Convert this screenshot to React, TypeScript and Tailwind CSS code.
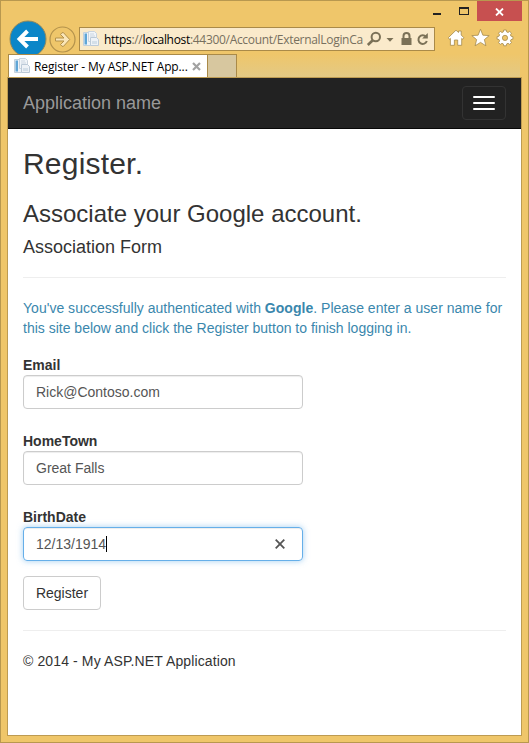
import React from "react";

function PageIcon() {
  return (
    <svg width="16" height="16" viewBox="0 0 16 16" className="shrink-0">
      <path d="M.5 1.500h7v13h-7z" fill="#eef3f8" stroke="#c3d0dc" />
      <path d="M1.500 2.500h2.500v11H1.500z" fill="#5fa5d6" />
      <path d="M5.500.5h6l2 2v8h-8z" fill="#f1f5f9" stroke="#c9d3de" />
      <path d="M7 3h4M7 5h5" stroke="#cbd5e1" />
      <path d="M7.500 6.500h6l2 2v6h-8z" fill="#eef2f7" stroke="#bccad8" />
      <path d="M9 10h5v3H9z" fill="#d4dfe9" />
    </svg>
  );
}

function TitleBar() {
  return (
    <div className="flex h-5 shrink-0 justify-end pr-[6px]">
      <svg width="44" height="20" viewBox="0 0 44 20" shapeRendering="crispEdges">
        <path d="M0 12h8v2H0z" fill="#222" />
        <path d="M26 6h10v8H26zM27 8v5h8V8z" fill="#222" fillRule="evenodd" />
      </svg>
      <div className="flex h-5 w-[45px] items-center justify-center bg-[#c75050]">
        <svg width="9" height="8" viewBox="0 0 9 8" className="mt-px">
          <path d="M1 .5l7 7M8 .5l-7 7" stroke="#fff" strokeWidth="1.8" />
        </svg>
      </div>
    </div>
  );
}

function AddressBar() {
  return (
    <div className="mt-[6px] flex h-6 w-[356px] items-center border border-[#aa8a48] bg-[#faeacb] pl-[3px]">
      <PageIcon />
      <div className="ml-[5px] mt-[2px] w-[259px] shrink-0 whitespace-nowrap font-['Open_Sans','Noto_Sans',sans-serif] text-[12px] leading-[20px] tracking-[-0.31px] text-[#77705f]">
        <span className="text-black">https</span>://<span className="text-black">localhost</span>:44300/Account/ExternalLoginCa
      </div>
      <svg width="66" height="22" viewBox="0 0 66 22" className="ml-[3px] shrink-0" fill="none" stroke="#7b7157">
        <circle cx="9.800" cy="9" r="4.200" strokeWidth="2" />
        <path d="M7 12L1.800 17" strokeWidth="2.600" />
        <path d="M20.500 10h7L24 13.700z" fill="#7b7157" stroke="none" />
        <path d="M35.500 10h10v7h-10z" fill="#7b7157" stroke="none" />
        <path d="M37.500 10.500V8a3 3 0 0 1 6 0v2.500" strokeWidth="2" />
        <path d="M60 8.800a4.300 4.300 0 1 0 .8 4.200" strokeWidth="2" />
        <path d="M61.800 5v5.500h-5.600z" fill="#7b7157" stroke="none" />
      </svg>
    </div>
  );
}

function Toolbar() {
  return (
    <div className="flex h-[33px] shrink-0 items-start pl-[7.500px]">
      <svg width="38" height="38" viewBox="0 0 38 38" className="-mt-px shrink-0">
        <circle cx="19" cy="19" r="18" fill="#0b86c8" stroke="#93895c" />
        <path d="M29 19H11M18.500 11L10.500 19l8 8" fill="none" stroke="#fff" strokeWidth="3.900" />
      </svg>
      <svg width="27" height="27" viewBox="0 0 27 27" className="ml-[2.500px] mt-[5px] shrink-0">
        <circle cx="13.500" cy="13.500" r="12.500" fill="#efc66a" stroke="#b3924c" strokeWidth="1.200" />
        <path d="M6.500 12h8.500L11.500 8.500l1.500-1.800h1.500l6.200 6.800-6.200 6.800H13l-1.500-1.800L15 15H6.500z" fill="#fae6b8" stroke="#b3924c" />
      </svg>
      <div className="w-[3px] shrink-0" />
      <AddressBar />
      <svg width="66" height="20" viewBox="0 0 66 20" className="ml-[13px] mt-[7px] shrink-0" fill="#fff" stroke="#a58a4c" strokeWidth=".8" strokeLinejoin="round">
        <path d="M8 2.200l2.500 2.300V3h2.700v4l2.600 2.700-1.100 1.600-1-.9V17.300H9.700V12H6.400v5.300H2.400v-6.900l-1 .9L.3 9.700z" />
        <path d="M32.500 1.200l2.400 6 6.300.4-4.800 4 1.500 6.200-5.400-3.400-5.400 3.400 1.500-6.200-4.800-4 6.300-.4z" />
        <path d="M55.300 3.900L55.700 2h2.600l.4 1.900 1.300.6 1.700-1.100 1.800 1.800-1.100 1.700.6 1.300 1.900.4v2.600l-1.900.4-.6 1.300 1.100 1.700-1.800 1.800-1.700-1.100-1.300.6-.4 1.900h-2.600l-.4-1.900-1.300-.6-1.700 1.100-1.800-1.800 1.100-1.700-.6-1.300-1.900-.4V8.600l1.900-.4.6-1.300-1.100-1.700 1.800-1.800 1.700 1.100z" />
        <circle cx="57" cy="9.900" r="2.600" fill="#efc66a" />
      </svg>
    </div>
  );
}

function Tabs() {
  return (
    <div className="relative z-10 flex h-[23px] shrink-0 pl-[7px]">
      <div className="flex h-[23px] w-[200px] items-center border-r border-t border-l border-[#aa8a48] bg-white pl-[5px]">
        <PageIcon />
        <span className="ml-1 mt-[2px] whitespace-nowrap font-['Open_Sans','Noto_Sans',sans-serif] text-[12px] leading-[20px] tracking-[-0.12px] text-black">
          Register - My ASP.NET App...
        </span>
        <svg width="9" height="9" viewBox="0 0 9 9" className="ml-1 shrink-0">
          <path d="M1 1l7 7M8 1L1 8" stroke="#a2a2a2" strokeWidth="2.200" />
        </svg>
      </div>
      <div className="h-[23px] w-[29px] border-r border-t border-[#aa8a48] bg-[#d7c79f]" />
      <div className="mr-2 flex-1 bg-gradient-to-b from-[#efc66a] to-[#e3c984]" />
    </div>
  );
}

function Field({ label, value, focused = false }: { label: string; value: string; focused?: boolean }) {
  return (
    <div>
      <div className="h-5 text-[14px] font-bold leading-5 text-[#333]">{label}</div>
      <div
        className={
          focused
            ? "flex h-[34px] w-[280px] items-center rounded border border-[#66afe9] px-3 text-[14px] text-[#555] shadow-[inset_0_1px_1px_rgba(0,0,0,.075),0_0_6px_rgba(102,175,233,.6)]"
            : "flex h-[34px] w-[280px] items-center rounded border border-[#ccc] px-3 text-[14px] text-[#555] shadow-[inset_0_1px_1px_rgba(0,0,0,.075)]"
        }
      >
        <span>{value}</span>
        {focused && (
          <>
            <span className="h-4 w-px bg-black" />
            <svg width="10" height="10" viewBox="0 0 10 10" className="ml-auto mr-[5px]">
              <path d="M.7.7l8.600 8.600M9.300.7L.7 9.300" stroke="#555" strokeWidth="1.800" />
            </svg>
          </>
        )}
      </div>
    </div>
  );
}

export default function App() {
  return (
    <div className="flex h-[743px] w-[529px] flex-col overflow-hidden border border-[#b8984f] bg-[#efc66a]">
      <TitleBar />
      <Toolbar />
      <Tabs />
      <div className="mx-[6px] h-[659px] shrink-0 border border-[#bd9b52] bg-white font-['Liberation_Sans',Arial,sans-serif] text-[14px] text-[#333]">
        <nav className="flex h-[51px] items-center justify-between border-b border-[#080808] bg-[#222] px-[15px]">
          <span className="text-[18px] leading-5 text-[#999]">Application name</span>
          <div className="flex h-[34px] w-11 flex-col items-center justify-center gap-1 rounded border border-[#333]">
            <i className="h-[2px] w-[22px] rounded-[1px] bg-white" />
            <i className="h-[2px] w-[22px] rounded-[1px] bg-white" />
            <i className="h-[2px] w-[22px] rounded-[1px] bg-white" />
          </div>
        </nav>
        <main className="px-[15px] pt-[18px]">
          <h2 className="text-[30px] leading-[33px] tracking-[0.2px]">Register.</h2>
          <h3 className="mt-[21px] text-[24px] leading-[26px]">Associate your Google account.</h3>
          <h4 className="mt-[10px] text-[18px] leading-5">Association Form</h4>
          <hr className="mt-5 border-[#eee]" />
          <p className="mt-5 whitespace-nowrap leading-5 text-[#3a87ad]">
            <span className="tracking-[0.02px]">
              You've successfully authenticated with <strong>Google</strong>. Please enter a user name for
            </span>
            <br />
            this site below and click the Register button to finish logging in.
          </p>
          <form className="mt-[17px] flex flex-col gap-[22px]">
            <Field label="Email" value="Rick@Contoso.com" />
            <Field label="HomeTown" value="Great Falls" />
            <Field label="BirthDate" value="12/13/1914" focused />
          </form>
          <button className="mt-[15px] flex h-[34px] w-[78px] items-center justify-center rounded border border-[#ccc]">Register</button>
          <hr className="mt-5 border-[#eee]" />
          <p className="mt-5 leading-5 tracking-[0.12px]">© 2014 - My ASP.NET Application</p>
        </main>
      </div>
    </div>
  );
}
